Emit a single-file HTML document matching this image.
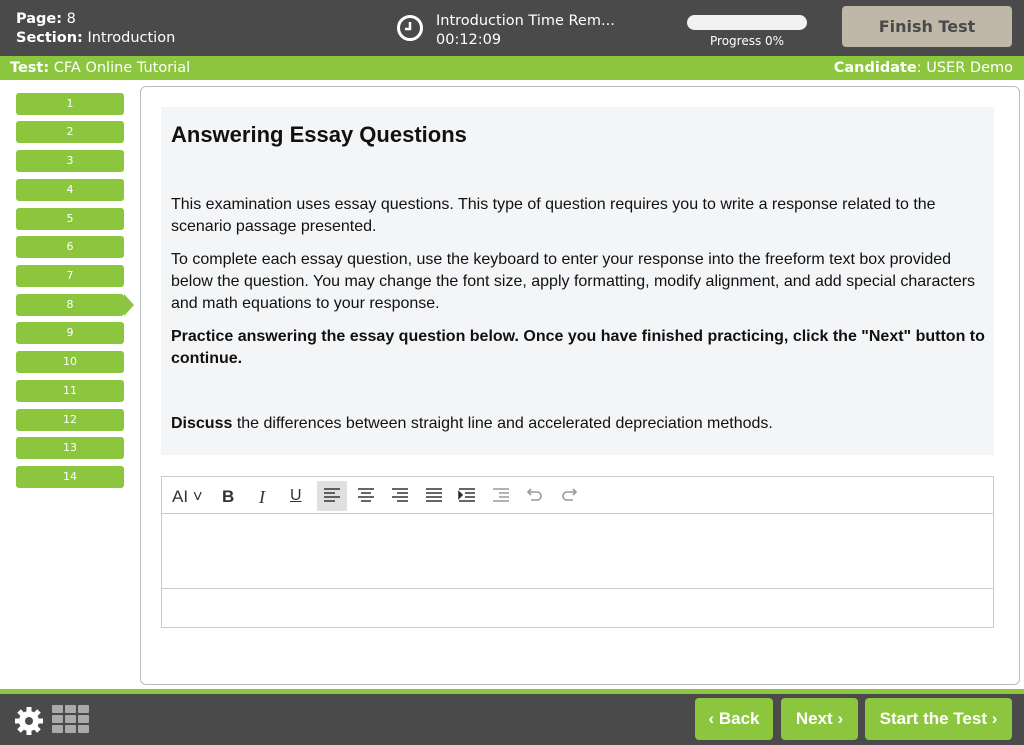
<!DOCTYPE html><html><head><style>
*{margin:0;padding:0;box-sizing:border-box}
body{width:1024px;height:745px;overflow:hidden;background:#fff;font-family:"Liberation Sans",sans-serif;position:relative}
.hd{position:absolute;left:0;top:0;width:1024px;height:56px;background:#4a4a4a;color:#fff;font-family:"DejaVu Sans",sans-serif;font-size:14.5px}
.gb{position:absolute;left:0;top:56px;width:1024px;height:24px;background:#8cc63e;color:#fff;font-family:"DejaVu Sans",sans-serif;font-size:14.5px;line-height:24px}
.nb{position:absolute;left:16px;width:108px;height:22px;background:#8cc63e;border-radius:3px;color:#fff;font-size:11px;text-align:center;line-height:22px;font-family:"DejaVu Sans",sans-serif}
.panel{position:absolute;left:140px;top:86px;width:880px;height:599px;border:1px solid #b8bcc2;border-radius:6px}
.gray{position:absolute;left:161px;top:107px;width:833px;height:348px;background:#f4f5f7;padding:15px 10px;color:#111;font-size:16px;line-height:22px}
.gray p{margin-bottom:11px;width:814px}
.ft{position:absolute;left:0;top:689px;width:1024px;height:56px;background:#4a4a4a;border-top:5px solid #8cc63e}
.btn{position:absolute;top:698px;height:42px;background:#8cc63e;border-radius:4px;color:#fff;font-family:"Liberation Sans",sans-serif;font-weight:bold;font-size:17px;line-height:42px;text-align:center}
.tb{position:absolute;left:161px;top:476px;width:833px;height:152px;border:1px solid #ccc}
.ic{position:absolute;top:10px;font-size:16px;color:#333}
</style></head><body>
<div class="hd">
<div style="position:absolute;left:16px;top:10px;line-height:19px"><b>Page:</b> 8<br><b>Section:</b> Introduction</div>
<svg style="position:absolute;left:396px;top:14px" width="28" height="28"><circle cx="14" cy="14" r="11.5" fill="none" stroke="#fff" stroke-width="3"/><path d="M14 8v7h-5" stroke="#fff" stroke-width="2.5" fill="none"/></svg>
<div style="position:absolute;left:436px;top:12px;line-height:19px">Introduction Time Rem...<br>00:12:09</div>
<div style="position:absolute;left:687px;top:15px;width:120px;height:15px;background:#f2f2f2;border-radius:8px"></div>
<div style="position:absolute;left:710px;top:34px;font-size:12px">Progress 0%</div>
<div style="position:absolute;left:842px;top:6px;width:170px;height:41px;background:#bfb8a8;border-radius:4px;color:#4a4a4a;font-weight:bold;font-size:16px;text-align:center;line-height:41px">Finish Test</div>
</div>
<div class="gb"><span style="position:absolute;left:10px"><b>Test:</b> CFA Online Tutorial</span><span style="position:absolute;right:11px"><b>Candidate</b>: USER Demo</span></div>
<div class="nb" style="top:93px">1</div><div class="nb" style="top:121px">2</div><div class="nb" style="top:150px">3</div><div class="nb" style="top:179px">4</div><div class="nb" style="top:208px">5</div><div class="nb" style="top:236px">6</div><div class="nb" style="top:265px">7</div><div class="nb" style="top:294px">8</div>
<div style="position:absolute;left:124px;top:294px;width:0;height:0;border-top:11px solid transparent;border-bottom:11px solid transparent;border-left:10px solid #8cc63e"></div>
<div class="nb" style="top:322px">9</div><div class="nb" style="top:351px">10</div><div class="nb" style="top:380px">11</div><div class="nb" style="top:409px">12</div><div class="nb" style="top:437px">13</div><div class="nb" style="top:466px">14</div>
<div class="panel"></div>
<div class="gray">
<div style="font-size:22px;font-weight:bold;line-height:26px;margin-bottom:46px">Answering Essay Questions</div>
<p>This examination uses essay questions. This type of question requires you to write a response related to the scenario passage presented.</p>
<p>To complete each essay question, use the keyboard to enter your response into the freeform text box provided below the question. You may change the font size, apply formatting, modify alignment, and add special characters and math equations to your response.</p>
<p style="font-weight:bold">Practice answering the essay question below. Once you have finished practicing, click the "Next" button to continue.</p>
<p style="margin-top:43px"><b>Discuss</b> the differences between straight line and accelerated depreciation methods.</p>
</div>
<div class="tb">
<div style="position:absolute;left:0;top:0;width:831px;height:37px;background:#fff;border-bottom:1px solid #ccc"></div>
<div style="position:absolute;left:155px;top:4px;width:30px;height:30px;background:#e0e0e0"></div>
<span class="ic" style="left:10px;font-size:17px">AI ˅</span>
<span class="ic" style="left:60px;font-weight:bold;font-size:17px">B</span>
<span class="ic" style="left:97px;font-style:italic;font-family:'Liberation Serif';font-size:18px">I</span>
<span class="ic" style="left:128px;text-decoration:underline">U</span>
<svg style="position:absolute;left:160px;top:10px" width="260" height="18" stroke="#333" stroke-width="1.6">
<path d="M2 2h16M2 6h11M2 10h16M2 14h11"/>
<path d="M36 2h16M39 6h10M36 10h16M39 14h10"/>
<path d="M70 2h16M75 6h11M70 10h16M75 14h11"/>
<path d="M104 2h16M104 6h16M104 10h16M104 14h16"/>
<path d="M137 2h16M143 6h10M143 10h10M137 14h16M137 5l3 3-3 3z"/>
<path d="M171 2h16M177 6h10M177 10h10M171 14h16" stroke="#999"/>
<path d="M207 5h8a4 4 0 0 1 0 8h-6M209 2l-3 3 3 3" stroke="#999" fill="none"/>
<path d="M253 5h-8a4 4 0 0 0 0 8h6M251 2l3 3-3 3" stroke="#999" fill="none"/>
</svg>
<div style="position:absolute;left:0;top:111px;width:831px;height:1px;background:#ccc"></div>
</div>
<div class="ft"></div>
<svg style="position:absolute;left:12px;top:704px" width="34" height="34"><circle cx="17" cy="17" r="10" fill="#fff"/><g stroke="#fff" stroke-width="5"><path d="M17 3v28M3 17h28M7 7l20 20M27 7l-20 20"/></g><circle cx="17" cy="17" r="4" fill="#4a4a4a"/></svg>
<svg style="position:absolute;left:52px;top:705px" width="38" height="30" fill="#aaa"><rect x="0" y="0" width="11" height="8" rx="1"/><rect x="13" y="0" width="11" height="8" rx="1"/><rect x="26" y="0" width="11" height="8" rx="1"/><rect x="0" y="10" width="11" height="8" rx="1"/><rect x="13" y="10" width="11" height="8" rx="1"/><rect x="26" y="10" width="11" height="8" rx="1"/><rect x="0" y="20" width="11" height="8" rx="1"/><rect x="13" y="20" width="11" height="8" rx="1"/><rect x="26" y="20" width="11" height="8" rx="1"/></svg>
<div class="btn" style="left:695px;width:78px">‹ Back</div>
<div class="btn" style="left:781px;width:77px">Next ›</div>
<div class="btn" style="left:865px;width:147px">Start the Test ›</div>
</body></html>
